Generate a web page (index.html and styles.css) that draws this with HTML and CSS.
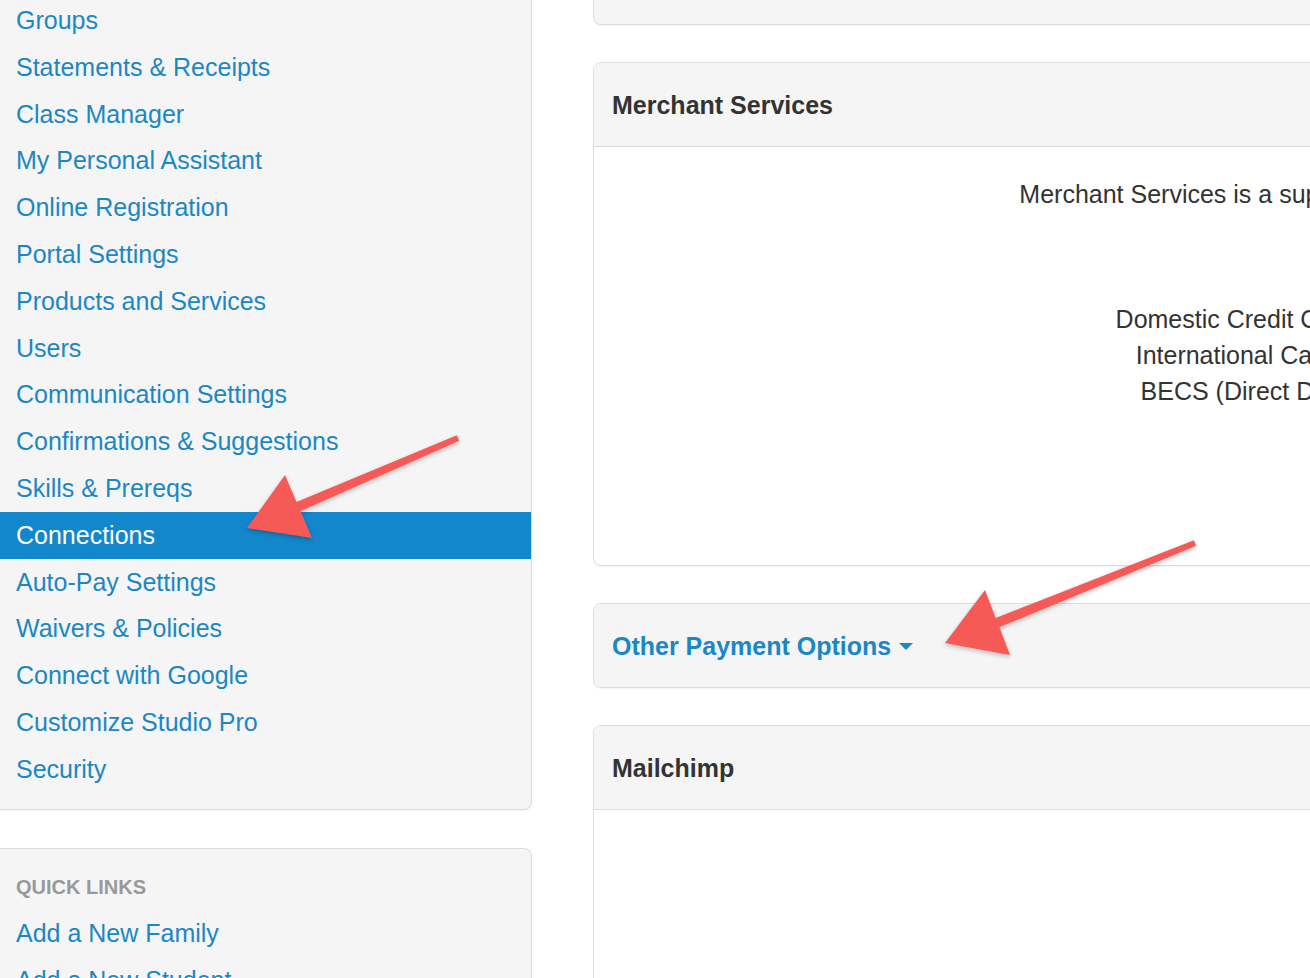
FILE: index.html
```html
<!DOCTYPE html>
<html lang="en">
<head>
  <meta charset="UTF-8"/>
  <meta name="viewport" content="width=device-width, initial-scale=1.0"/>
  <title>Settings - Connections</title>
  <link rel="stylesheet" href="styles.css">
</head>
<body>
  <div class="page">
    <div class="sidebar">
      <div class="side-panel nav-panel">
        <ul class="nav">
          <li><a href="#">Groups</a></li>
          <li><a href="#">Statements &amp; Receipts</a></li>
          <li><a href="#">Class Manager</a></li>
          <li><a href="#">My Personal Assistant</a></li>
          <li><a href="#">Online Registration</a></li>
          <li><a href="#">Portal Settings</a></li>
          <li><a href="#">Products and Services</a></li>
          <li><a href="#">Users</a></li>
          <li><a href="#">Communication Settings</a></li>
          <li><a href="#">Confirmations &amp; Suggestions</a></li>
          <li><a href="#">Skills &amp; Prereqs</a></li>
          <li class="active"><a href="#">Connections</a></li>
          <li><a href="#">Auto-Pay Settings</a></li>
          <li><a href="#">Waivers &amp; Policies</a></li>
          <li><a href="#">Connect with Google</a></li>
          <li><a href="#">Customize Studio Pro</a></li>
          <li><a href="#">Security</a></li>
        </ul>
      </div>

      <div class="side-panel quick-panel">
        <ul class="nav">
          <li class="nav-header">QUICK LINKS</li>
          <li><a href="#">Add a New Family</a></li>
          <li><a href="#">Add a New Student</a></li>
        </ul>
      </div>
    </div>

    <div class="main">
      <div class="panel top-panel"></div>

      <div class="panel">
        <div class="panel-heading">
          <h3>Merchant Services</h3>
        </div>
        <div class="panel-body merchant-body">
          <p class="intro">Merchant Services is a supported payment processor for Studio Pro.</p>
          <p class="rates">
            Domestic Credit Cards: 2.9% + 30¢ per transaction<br>
            International Cards: 3.5% + 30¢ per transaction<br>
            BECS (Direct Debit): 1% + 30¢ per transaction
          </p>
        </div>
      </div>

      <div class="panel">
        <div class="panel-heading">
          <a class="toggle" href="#">Other Payment Options <span class="caret"></span></a>
        </div>
      </div>

      <div class="panel">
        <div class="panel-heading">
          <h3>Mailchimp</h3>
        </div>
        <div class="panel-body mailchimp-body"></div>
      </div>
    </div>
  </div>

  <!-- annotation arrows drawn over the screenshot -->
  <svg class="arrows" width="1310" height="978" viewBox="0 0 1310 978">
    <polygon points="456.8,435.2 296.5,501.9 285,475 247,528 312,538 300.5,511.1 459.2,440.8"/>
    <polygon points="1193.9,540.2 995.6,617.9 985,590 945,643 1010,655 999.4,627.1 1196.1,545.8"/>
  </svg>
</body>
</html>
```

FILE: styles.css
```css
body {
  margin: 0;
  width: 1310px;
  height: 978px;
  overflow: hidden;
  position: relative;
  background-color: #fff;
  font-family: "Liberation Sans", Arial, sans-serif;
  font-size: 25px;
  color: #333;
}
.page {
  display: flex;
  gap: 61px;
  align-items: flex-start;
}
.sidebar {
  width: 532px;
  flex: none;
  display: flex;
  flex-direction: column;
  gap: 38px;
}
.side-panel {
  background-color: #f5f5f5;
  border: 1px solid #ddd;
  border-left: none;
  box-shadow: 0 1px 1px rgba(0, 0, 0, 0.04);
}
.nav-panel {
  border-top: none;
  border-radius: 0 0 8px 0;
  margin-top: -3px;
  padding-bottom: 16px;
}
.quick-panel {
  border-radius: 0 8px 0 0;
  padding-top: 15px;
  height: 200px;
}
.nav {
  list-style: none;
  margin: 0;
  padding: 0;
}
.nav li {
  height: 46.8px;
  line-height: 46.8px;
}
.nav a {
  display: block;
  padding-left: 16px;
  color: #1b87c4;
  text-decoration: none;
}
.nav li.active {
  background-color: #1287cc;
}
.nav li.active a {
  color: #fff;
}
.nav-header {
  padding-left: 16px;
  font-size: 20px;
  font-weight: bold;
  color: #999;
}
.main {
  width: 1610px;
  flex: none;
  display: flex;
  flex-direction: column;
  gap: 37px;
}
.panel {
  background-color: #fff;
  border: 1px solid #ddd;
  border-radius: 8px;
  box-shadow: 0 1px 1px rgba(0, 0, 0, 0.05);
  overflow: hidden;
}
.top-panel {
  border-top: none;
  border-radius: 0 0 8px 8px;
  background-color: #f5f5f5;
  height: 24px;
}
.panel-heading {
  height: 83px;
  display: flex;
  align-items: center;
  padding: 0 18px;
  background-color: #f5f5f5;
}
.panel-heading h3 {
  margin: 0;
  padding-top: 2px;
  font-size: 25px;
  font-weight: bold;
  color: #333;
}
.panel-body {
  border-top: 1px solid #ddd;
}
.merchant-body {
  height: 418px;
  text-align: center;
  line-height: 36px;
}
.intro {
  margin: 29px 0 0;
}
.rates {
  margin: 89px 0 0;
}
.mailchimp-body {
  height: 300px;
}
.toggle {
  color: #1b87c4;
  font-weight: bold;
  text-decoration: none;
  display: flex;
  align-items: center;
  padding-top: 2px;
}
.caret {
  display: inline-block;
  width: 0;
  height: 0;
  margin-left: 8px;
  border-top: 7px solid #1b87c4;
  border-left: 7px solid transparent;
  border-right: 7px solid transparent;
}
.arrows {
  position: absolute;
  top: 0;
  left: 0;
  pointer-events: none;
  fill: #f65a57;
  filter: drop-shadow(0 2px 2px rgba(0, 0, 0, 0.25));
}
```
